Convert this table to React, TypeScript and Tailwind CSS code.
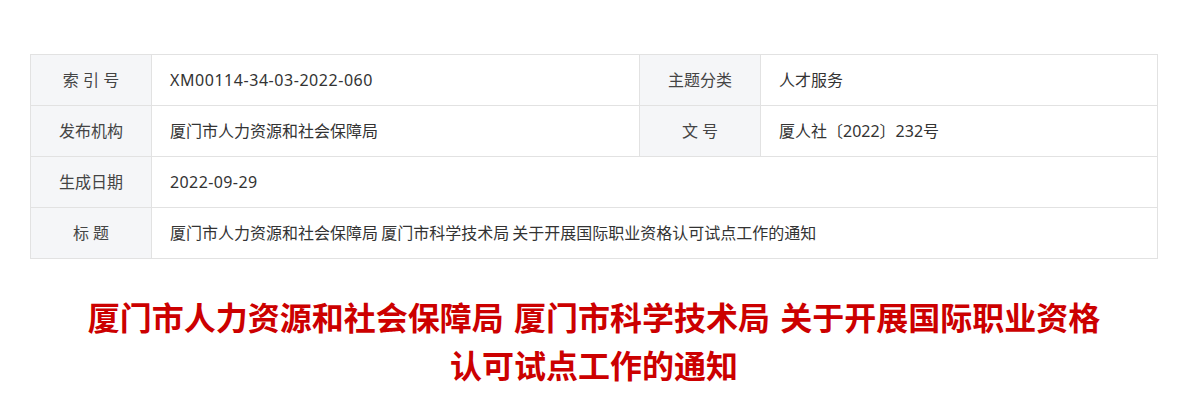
import React from "react";

const font = { fontFamily: '"Noto Sans", "Noto Sans CJK SC", sans-serif' };

function Label({ children }: { children: React.ReactNode }) {
  return (
    <div className="flex items-center justify-center bg-[#f5f6f8] border-r border-[#e2e2e2] text-[16px] text-[#444]">
      {children}
    </div>
  );
}

function Value({ children, last }: { children: React.ReactNode; last?: boolean }) {
  return (
    <div className={"flex items-center pl-[18px] text-[16px] text-[#333] " + (last ? "" : "border-r border-[#e2e2e2]")}>
      {children}
    </div>
  );
}

export default function App() {
  return (
    <div className="bg-white w-[1182px] h-[414px] pt-[54px]" style={font}>
      <div className="ml-[30px] w-[1128px] border border-[#e2e2e2]">
        <div className="grid grid-cols-[121px_488px_121px_1fr] h-[51px] border-b border-[#e2e2e2]">
          <Label>索 引 号</Label>
          <Value>
            <span className="tracking-[0.55px]">XM00114-34-03-2022-060</span>
          </Value>
          <Label>主题分类</Label>
          <Value last>人才服务</Value>
        </div>
        <div className="grid grid-cols-[121px_488px_121px_1fr] h-[51px] border-b border-[#e2e2e2]">
          <Label>发布机构</Label>
          <Value>厦门市人力资源和社会保障局</Value>
          <Label>文 号</Label>
          <Value last>厦人社〔2022〕232号</Value>
        </div>
        <div className="grid grid-cols-[121px_1fr] h-[51px] border-b border-[#e2e2e2]">
          <Label>生成日期</Label>
          <Value last>
            <span className="tracking-[0.4px]">2022-09-29</span>
          </Value>
        </div>
        <div className="grid grid-cols-[121px_1fr] h-[50px]">
          <Label>标 题</Label>
          <Value last>
            <span className="[word-spacing:-1px]">
              厦门市人力资源和社会保障局 厦门市科学技术局 关于开展国际职业资格认可试点工作的通知
            </span>
          </Value>
        </div>
      </div>
      <h1 className="ml-[30px] w-[1128px] mt-[35px] text-center text-[32px] leading-[48px] font-bold text-[#cc0000] [word-spacing:2px]">
        厦门市人力资源和社会保障局 厦门市科学技术局 关于开展国际职业资格
        <br />
        认可试点工作的通知
      </h1>
    </div>
  );
}
